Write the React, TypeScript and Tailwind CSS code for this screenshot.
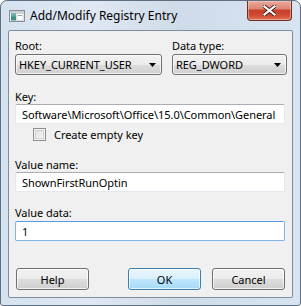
import React from "react";

const font = { fontFamily: '"Noto Sans", "Open Sans", sans-serif' };

function AppIcon() {
  return (
    <svg width="16" height="12" viewBox="0 0 16 12" className="shrink-0">
      <rect x="0.5" y="0.5" width="15" height="11" fill="#f4f4f4" stroke="#8a8f96" />
      <rect x="1" y="1" width="14" height="2" fill="#c9ced6" />
      <rect x="2" y="3.5" width="5" height="7" fill="#3f8f86" />
      <rect x="2" y="3.5" width="5" height="3" fill="#67b0a4" />
      <rect x="8" y="3.5" width="6" height="7" fill="#ffffff" stroke="#b9bec6" strokeWidth="0.6" />
      <rect x="9" y="5" width="4" height="1" fill="#9aa3ad" />
    </svg>
  );
}

function CloseButton() {
  return (
    <div className="flex h-[20px] w-[45px] items-center justify-center rounded-b-[4px] border border-t-0 border-[#6b2e27] bg-[linear-gradient(#e9a99b_0%,#dd8676_40%,#c7402c_50%,#cf4a33_75%,#e07358_100%)] shadow-[inset_0_0_0_1px_rgba(255,220,210,0.45)]">
      <svg width="13" height="11" viewBox="0 0 13 11">
        <path
          d="M1.5 1.5 L11.5 9.5 M11.5 1.5 L1.5 9.5"
          stroke="#4a1a14"
          strokeWidth="4"
          strokeLinecap="square"
        />
        <path
          d="M1.5 1.5 L11.5 9.5 M11.5 1.5 L1.5 9.5"
          stroke="#ffffff"
          strokeWidth="2.2"
          strokeLinecap="square"
        />
      </svg>
    </div>
  );
}

function Combo({ value, className }: { value: string; className: string }) {
  return (
    <div
      className={`flex h-[21px] items-center justify-between rounded-[3px] border border-[#707070] bg-[linear-gradient(#f2f2f2_0%,#ebebeb_50%,#dddddd_51%,#cfcfcf_100%)] pl-[3px] pr-[5px] text-[11px] leading-none tracking-[-0.05px] text-black shadow-[inset_0_0_0_1px_rgba(255,255,255,0.7)] ${className}`}
    >
      <span>{value}</span>
      <svg width="7" height="4" viewBox="0 0 7 4">
        <path d="M0 0 H7 L3.5 4 Z" fill="#000" />
      </svg>
    </div>
  );
}

function TextBox({ value, focused }: { value: string; focused?: boolean }) {
  return (
    <div
      className={`flex h-[20px] items-center rounded-[2px] border bg-white pl-[6px] text-[11px] leading-none tracking-[-0.05px] text-black ${
        focused
          ? "border-[#7eb4ea] border-t-[#569de5]"
          : "border-[#e3e9ef] border-t-[#abadb3]"
      }`}
    >
      {value}
    </div>
  );
}

function Button({ label, primary }: { label: string; primary?: boolean }) {
  return (
    <div
      className={`flex h-[22px] w-[73px] items-center justify-center rounded-[3px] border text-[11px] leading-none text-black shadow-[inset_0_0_0_1px_rgba(255,255,255,0.7)] ${
        primary
          ? "border-[#3c7fb1] bg-[linear-gradient(#eaf6fd_0%,#d9f0fc_50%,#bee6fd_51%,#a7d9f5_100%)]"
          : "border-[#707070] bg-[linear-gradient(#f2f2f2_0%,#ebebeb_50%,#dddddd_51%,#cfcfcf_100%)]"
      }`}
    >
      {label}
    </div>
  );
}

function Label({ children, className = "" }: { children: React.ReactNode; className?: string }) {
  return <div className={`h-[15px] text-[11px] leading-[15px] tracking-[-0.05px] text-black ${className}`}>{children}</div>;
}

export default function App() {
  return (
    <div
      style={font}
      className="flex h-[306px] w-[301px] flex-col rounded-t-[7px] rounded-b-[3px] border border-[#5f6f82] bg-[linear-gradient(90deg,#d5e2f0_0%,#dfe8f3_30%,#cfdbe8_60%,#d8e4f1_100%)] px-[7px] pb-[7px]"
    >
      <div className="flex h-[29px] items-start justify-between">
        <div className="flex h-[29px] items-center gap-[5px] pl-[1px]">
          <AppIcon />
          <span className="text-[12px] leading-none text-black">Add/Modify Registry Entry</span>
        </div>
        <div className="mr-[1px]">
          <CloseButton />
        </div>
      </div>

      <div className="flex flex-1 flex-col rounded-[2px] border border-[#7f8d9c] bg-[#f0f0f0] pl-[6px] pr-[7px] pt-[7px]">
        <div className="flex gap-[10px]">
          <div className="flex w-[147px] flex-col gap-[1px]">
            <Label>Root:</Label>
            <Combo value="HKEY_CURRENT_USER" className="w-[147px]" />
          </div>
          <div className="flex w-[115px] flex-col gap-[1px]">
            <Label>Data type:</Label>
            <Combo value="REG_DWORD" className="w-[115px]" />
          </div>
        </div>

        <Label className="mt-[14px]">Key:</Label>
        <TextBox value="Software\Microsoft\Office\15.0\Common\General" />

        <div className="mt-[3px] flex h-[15px] items-center gap-[8px] pl-[18px]">
          <div className="h-[13px] w-[13px] border border-[#8e8f8f] bg-[linear-gradient(135deg,#dcdcdc,#fbfbfb)] shadow-[inset_0_0_0_1px_#f4f4f4,inset_0_0_0_2px_#d0d0d0]" />
          <span className="text-[11px] leading-none tracking-[-0.05px] text-black">Create empty key</span>
        </div>

        <Label className="mt-[15px]">Value name:</Label>
        <TextBox value="ShownFirstRunOptin" />

        <Label className="mt-[13px]">Value data:</Label>
        <div className="mt-[1px]">
          <TextBox value="1" focused />
        </div>

        <div className="mt-[27px] flex pl-[1px]">
          <Button label="Help" />
          <div className="ml-[39px]">
            <Button label="OK" primary />
          </div>
          <div className="ml-[11px]">
            <Button label="Cancel" />
          </div>
        </div>
      </div>
    </div>
  );
}
